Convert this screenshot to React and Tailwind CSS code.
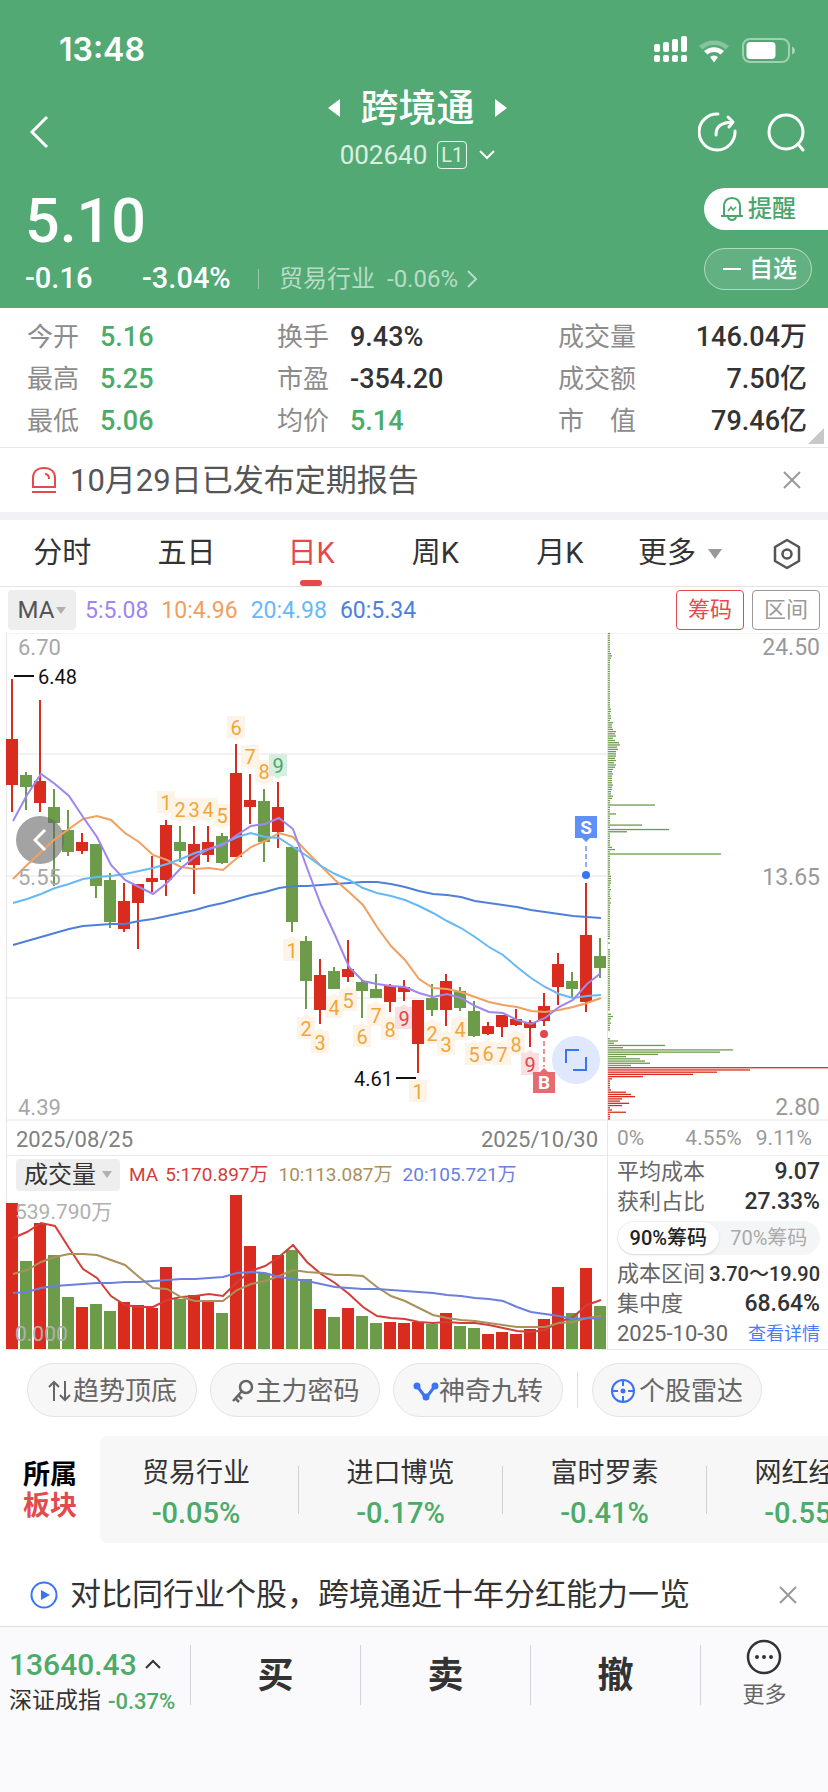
import { useState } from 'react';

const RED = '#d92c1f';
const GREEN = '#6c9c49';

// [up, high, low, top, bottom]
const candles = [
  [1, 46, 179, 106, 152], [0, 139, 177, 142, 154], [1, 67, 179, 148, 170], [0, 156, 253, 174, 190],
  [0, 177, 223, 197, 219], [1, 200, 221, 209, 218], [0, 211, 265, 211, 253], [0, 240, 295, 247, 289],
  [1, 250, 299, 268, 296], [1, 251, 316, 251, 270], [1, 223, 259, 245, 249], [1, 187, 263, 192, 247],
  [0, 193, 229, 209, 218], [1, 193, 261, 211, 232], [1, 193, 229, 209, 222], [0, 200, 231, 203, 230],
  [1, 111, 224, 140, 224], [1, 141, 191, 167, 174], [0, 156, 229, 168, 209], [1, 149, 215, 174, 199],
  [0, 214, 299, 214, 289], [0, 303, 376, 308, 348], [1, 326, 391, 342, 377], [0, 334, 356, 338, 356],
  [1, 307, 349, 336, 344], [0, 347, 385, 349, 358], [0, 341, 365, 356, 365], [1, 351, 379, 353, 369],
  [1, 347, 368, 354, 359], [1, 367, 440, 367, 411], [0, 351, 383, 365, 377], [1, 341, 393, 348, 377],
  [0, 354, 378, 358, 375], [0, 368, 404, 378, 403], [1, 389, 402, 393, 401], [1, 382, 404, 382, 394],
  [1, 376, 393, 386, 392], [1, 387, 414, 389, 395], [1, 360, 393, 373, 388], [1, 320, 372, 331, 354],
  [0, 339, 364, 348, 356], [1, 250, 379, 302, 369], [0, 305, 345, 323, 335],
];

const priceLines = [
  {
    color: '#4f80d9',
    ys: [312, 308, 304, 300, 296, 293, 292, 291, 291, 288, 286, 283, 280, 277, 273, 270, 266, 262, 259, 255, 253, 253, 252, 251, 250, 249, 249, 251, 254, 258, 261, 262, 264, 268, 270, 272, 274, 277, 279, 281, 283, 284, 285],
  },
  {
    color: '#f0a060',
    ys: [246, 232, 219, 206, 196, 186, 183, 187, 200, 209, 222, 227, 234, 236, 235, 237, 225, 214, 208, 200, 204, 219, 233, 247, 259, 272, 294, 313, 327, 346, 355, 356, 359, 364, 369, 372, 374, 378, 379, 377, 374, 370, 365],
  },
  {
    color: '#66b9f7',
    ys: [270, 266, 261, 255, 251, 246, 244, 243, 241, 238, 235, 231, 226, 220, 216, 211, 204, 200, 204, 205, 214, 223, 233, 241, 247, 255, 260, 263, 267, 273, 280, 288, 295, 304, 314, 322, 334, 345, 354, 361, 365, 363, 362],
  },
  {
    color: '#9f86ee',
    ys: [188, 162, 141, 151, 163, 184, 204, 232, 247, 254, 261, 250, 235, 224, 216, 212, 202, 193, 191, 185, 196, 235, 272, 302, 334, 348, 351, 353, 354, 360, 364, 361, 365, 373, 379, 380, 387, 391, 385, 374, 367, 351, 340],
  },
];

// [candle index, label, top]
const marks = [
  [11, 1, 158], [12, 2, 165], [13, 3, 165], [14, 4, 165], [15, 5, 171], [16, 6, 83], [17, 7, 112], [18, 8, 127], [19, 9, 121],
  [20, 1, 306], [21, 2, 384], [22, 3, 398], [23, 4, 363], [24, 5, 356], [25, 6, 392], [26, 7, 371], [27, 8, 385], [28, 9, 374],
  [29, 1, 447], [30, 2, 389], [31, 3, 400], [32, 4, 385], [33, 5, 410], [34, 6, 409], [35, 7, 410], [36, 8, 400], [37, 9, 420],
];

const volumes = [146, 88, 126, 94, 52, 42, 45, 38, 47, 44, 41, 82, 50, 54, 49, 36, 154, 103, 76, 94, 99, 70, 40, 32, 41, 33, 26, 27, 26, 27, 25, 36, 23, 21, 15, 17, 15, 20, 30, 62, 36, 81, 43];

const volumeLines = [
  {
    color: '#d23f3a',
    hs: [111, 117, 126, 123, 101, 80, 71, 53, 44, 42, 42, 49, 52, 53, 55, 53, 67, 78, 83, 92, 104, 87, 75, 66, 55, 42, 33, 31, 30, 27, 26, 27, 26, 26, 24, 21, 18, 17, 19, 27, 32, 44, 49],
  },
  {
    color: '#ab905c',
    hs: [75, 79, 87, 92, 95, 95, 94, 89, 84, 72, 61, 60, 52, 48, 48, 48, 59, 65, 68, 73, 79, 77, 76, 74, 74, 73, 62, 53, 48, 41, 34, 31, 29, 28, 26, 24, 22, 22, 22, 26, 27, 31, 33],
  },
  {
    color: '#6a80dc',
    hs: [56, 57, 61, 63, 64, 65, 66, 66, 67, 67, 68, 69, 70, 70, 71, 72, 76, 77, 76, 72, 70, 68, 65, 62, 61, 60, 60, 59, 58, 57, 56, 54, 53, 51, 50, 48, 42, 37, 35, 33, 30, 31, 30],
  },
];

// chip distribution rows that differ from the 2px minimum
const chipRows = {
  9: 3, 10: 4, 11: 3, 34: 3, 35: 3, 37: 3, 38: 3, 40: 5, 41: 4, 42: 4, 43: 5, 44: 8, 45: 7, 46: 8, 47: 5, 48: 7, 49: 11, 50: 12, 51: 9,
  52: 10, 53: 8, 54: 8, 55: 8, 56: 7, 57: 8, 58: 6, 59: 8, 60: 7, 61: 5, 62: 4, 63: 5, 64: 4, 65: 4, 66: 4, 67: 4, 68: 5, 69: 4,
  70: 4, 71: 3, 72: 3, 73: 5, 74: 4, 77: 47, 81: 8, 86: 34, 88: 61, 89: 19, 96: 4, 97: 7, 99: 113, 109: 3, 110: 3, 111: 3, 112: 3,
  115: 3, 119: 3, 121: 3, 138: 0, 140: 0, 141: 0, 170: 0, 171: 3, 172: 5, 173: 3, 175: 3, 179: 0, 180: 0, 181: 0, 183: 10, 184: 6,
  185: 57, 186: 15, 187: 125, 188: 112, 189: 50, 190: 18, 191: 32, 192: 37, 193: 42, 194: 23, 195: 220, 196: 142, 197: 109,
  198: 85, 199: 35, 200: 4, 205: 3, 206: 18, 207: 23, 208: 27, 209: 14, 210: 12, 211: 21, 212: 14, 214: 4, 215: 18,
};

const stats = [
  ['今开', '5.16', true], ['换手', '9.43%'], ['成交量', '146.04万'],
  ['最高', '5.25', true], ['市盈', '-354.20'], ['成交额', '7.50亿'],
  ['最低', '5.06', true], ['均价', '5.14', true], ['市值', '79.46亿'],
];

const sectors = [
  ['贸易行业', '-0.05%'], ['进口博览', '-0.17%'], ['富时罗素', '-0.41%'], ['网红经济', '-0.55%'],
];

const toPoints = (ys) => ys.map((y, i) => `${13 + i * 14},${y}`).join(' ');

function StatusIcons() {
  return (
    <svg width="142" height="28" viewBox="0 0 142 28" fill="white">
      {[8, 6, 3, 0].map((y, i) => (
        <g key={i}>
          <rect x={i * 9} y={y} width="6" height={16 - y} rx="2" />
          <rect x={i * 9} y="19" width="6" height="7" rx="2" />
        </g>
      ))}
      <path d="M45 10 A23 23 0 0 1 75 10 L71.500 13.500 A17 17 0 0 0 48.500 13.500 Z" opacity=".3" />
      <path d="M50 15 A15 15 0 0 1 70 15 L66.500 18.500 A10 10 0 0 0 53.500 18.500 Z" />
      <path d="M56 21 A6 6 0 0 1 64 21 L60 26.500 Z" />
      <rect x="89" y="3" width="46" height="23" rx="7" fill="none" stroke="white" strokeWidth="2" opacity=".45" />
      <rect x="92.500" y="6" width="29" height="17" rx="4" />
      <path d="M138 10.500 C142 12 142 17 138 18.500 Z" opacity=".5" />
    </svg>
  );
}

function CloseIcon() {
  return (
    <svg width="18" height="18" viewBox="0 0 18 18" stroke="#999" strokeWidth="2">
      <path d="M1 1 L17 17 M17 1 L1 17" />
    </svg>
  );
}

function Header() {
  return (
    <header className="bg-[#52a974] text-white">
      <div className="flex h-[84px] items-center justify-between pt-4 pr-8 pl-[59px]">
        <span className="font-[Inter] text-[32px] leading-9 font-semibold">13:48</span>
        <StatusIcons />
      </div>

      <div className="grid grid-cols-[1fr_auto_1fr] items-center pt-px pr-[22px] pl-[29px]">
        <button aria-label="返回" className="justify-self-start">
          <svg width="20" height="34" viewBox="0 0 20 34" fill="none" stroke="white" strokeWidth="3">
            <path d="M18 2 L3 17 L18 32" />
          </svg>
        </button>
        <div className="flex flex-col items-center">
          <h1 className="flex h-[46px] items-center gap-5 text-[38px] leading-[46px] font-medium">
            <svg width="12" height="18" viewBox="0 0 12 18" fill="white"><path d="M12 0 V18 L0 9 Z" /></svg>
            跨境通
            <svg width="12" height="18" viewBox="0 0 12 18" fill="white"><path d="M0 0 V18 L12 9 Z" /></svg>
          </h1>
          <div className="flex h-12 items-center">
            <span className="text-[26px] text-white/80">002640</span>
            <span className="ml-[10px] flex h-[28px] w-[30px] items-center justify-center rounded-[4px] border border-white/90 text-[20px] text-white/80">L1</span>
            <svg className="ml-3" width="16" height="10" viewBox="0 0 16 10" fill="none" stroke="white" strokeWidth="2">
              <path d="M1 1 L8 8 L15 1" />
            </svg>
          </div>
        </div>
        <div className="flex items-center gap-[28px] justify-self-end">
          <button aria-label="分享">
            <svg width="40" height="40" viewBox="0 0 40 40" fill="none" stroke="white" strokeWidth="3" strokeLinecap="round" strokeLinejoin="round">
              <path d="M20 2 A18 18 0 1 0 37 19" />
              <path d="M18 23 C18 14 23 11 34 10 M30 5 L35 10 L31 15" />
            </svg>
          </button>
          <button aria-label="搜索">
            <svg width="40" height="40" viewBox="0 0 40 40" fill="none" stroke="white" strokeWidth="3" strokeLinecap="round">
              <circle cx="20" cy="20" r="17" />
              <path d="M32 32 L37 38" />
            </svg>
          </button>
        </div>
      </div>

      <div className="flex justify-between pt-[9px] pb-3">
        <div className="pl-[25px]">
          <p className="text-[61px] leading-[66px] font-medium">5.10</p>
          <div className="mt-2 flex h-[34px] items-center text-[29px] font-medium">
            <span className="w-[117px]">-0.16</span>
            <span className="w-[116px]">-3.04%</span>
            <span className="h-5 w-px bg-white/40" />
            <a href="#industry" className="ml-5 flex items-center text-2xl font-normal text-white/60">
              <span>贸易行业</span>
              <span className="ml-3">-0.06%</span>
              <svg className="ml-2" width="12" height="18" viewBox="0 0 12 18" fill="none" stroke="currentColor" strokeWidth="2">
                <path d="M2 1 L10 9 L2 17" />
              </svg>
            </a>
          </div>
        </div>
        <div className="flex flex-col gap-[18px]">
          <button className="flex h-[42px] w-[124px] items-center rounded-l-full bg-white pl-4 text-2xl font-medium text-[#4ba56c]">
            <svg className="mr-1" width="24" height="26" viewBox="0 0 24 26" fill="none" stroke="currentColor" strokeWidth="2">
              <path d="M4 20 V11 C4 5 7 2 12 2 C17 2 20 5 20 11 V20 M1 20 H23 M8 21 C9 25 15 25 16 21" />
              <path d="M8 15 L11 11 L13 14 L16 11" strokeWidth="1.500" />
            </svg>
            提醒
          </button>
          <button className="flex h-[42px] w-[108px] items-center rounded-full border border-white/50 bg-white/10 pl-[18px] text-2xl font-medium">
            <span className="mr-2 h-[2px] w-[18px] bg-white" />
            自选
          </button>
        </div>
      </div>
    </header>
  );
}

function Stats() {
  return (
    <section className="relative grid grid-cols-[250fr_281fr_249fr] border-b border-[#e8e8e8] pt-2 pr-[21px] pb-[5px] pl-[27px]">
      {stats.map(([label, value, down], i) => {
        const last = i % 3 === 2;
        return (
          <div key={label} className={`flex h-[42px] items-center text-[26px] ${last ? 'justify-between' : ''}`}>
            <span className={`flex justify-between text-[#8c8c8c] ${last ? 'w-[78px]' : 'w-[73px]'}`}>
              {label === '市值' ? <><span>市</span><span>值</span></> : label}
            </span>
            <span className={`text-[27px] font-medium ${down ? 'text-[#4cab68]' : 'text-[#333]'}`}>{value}</span>
          </div>
        );
      })}
      <svg className="absolute right-1 bottom-[3px]" width="16" height="16" viewBox="0 0 16 16" fill="#c8c8c8">
        <path d="M16 0 V16 H0 Z" />
      </svg>
    </section>
  );
}

function Tabs() {
  const [active, setActive] = useState('日K');
  return (
    <nav className="flex h-[67px] border-b border-[#e4e4e4] text-[29px] text-[#333]">
      {['分时', '五日', '日K', '周K', '月K'].map((tab) => (
        <button
          key={tab}
          onClick={() => setActive(tab)}
          className={`relative flex-1 pt-[2px] ${active === tab ? 'text-[#e34a4c]' : ''}`}
        >
          {tab}
          {active === tab && (
            <span className="absolute bottom-0 left-1/2 h-[6px] w-[22px] -translate-x-1/2 rounded-full bg-[#e34a4c]" />
          )}
        </button>
      ))}
      <div className="flex w-[206px] items-center justify-between pt-[2px] pr-[27px] pl-4">
        <button className="flex items-center gap-3">
          更多
          <svg width="14" height="10" viewBox="0 0 14 10" fill="#999"><path d="M0 0 H14 L7 10 Z" /></svg>
        </button>
        <button aria-label="设置">
          <svg width="28" height="32" viewBox="0 0 28 32" fill="none" stroke="#555" strokeWidth="2.500" strokeLinejoin="round">
            <path d="M14 2 L26 9 V23 L14 30 L2 23 V9 Z" />
            <circle cx="14" cy="16" r="4.500" />
          </svg>
        </button>
      </div>
    </nav>
  );
}

function Mark({ index, label, top }) {
  const x = 12 + index * 14;
  const above = index < 20;
  let bg = '#fdf4e7';
  let fg = '#f0a63a';
  if (label === 9) {
    bg = above ? '#d8eee0' : '#f9dfe0';
    fg = above ? '#45ab6e' : '#e2474c';
  }
  return (
    <g>
      <rect x={x - 9} y={top} width="18" height="22" fill={bg} />
      <path d={above ? `M${x - 4} ${top + 22} h8 l-4 3 Z` : `M${x - 4} ${top} h8 l-4 -3 Z`} fill={bg} />
      <text x={x} y={top + 19} textAnchor="middle" fontSize="20" fill={fg}>{label}</text>
    </g>
  );
}

function PriceChart() {
  return (
    <div className="relative">
      <svg className="block h-[488px] w-full" viewBox="0 0 608 488" preserveAspectRatio="xMinYMin meet">
        <g stroke="#f2f2f2" strokeWidth="2">
          {[0, 121, 243, 365, 487].map((y) => <path key={y} d={`M6 ${y} H607`} />)}
        </g>
        <path d="M6.500 0 V488 M607.500 0 V488" stroke="#e6e6e6" />
        {marks.map(([index, label, top]) => <Mark key={index} index={index} label={label} top={top} />)}
        {candles.map(([up, high, low, top, bottom], i) => (
          <g key={i} fill={up ? RED : GREEN}>
            <rect x={11 + i * 14} y={high} width="2" height={low - high} />
            <rect x={6 + i * 14} y={top} width="12" height={bottom - top} />
          </g>
        ))}
        <circle cx="40" cy="207" r="24" fill="#666" opacity=".6" />
        {priceLines.map(({ color, ys }) => (
          <polyline key={color} points={toPoints(ys)} fill="none" stroke={color} strokeWidth="2" />
        ))}
        <g fontSize="22" fill="#a8a8a8">
          <text x="18" y="22">6.70</text>
          <text x="18" y="252">5.55</text>
          <text x="18" y="482">4.39</text>
        </g>
        <g fontSize="20" fill="#111">
          <text x="38" y="51">6.48</text>
          <text x="354" y="453">4.61</text>
          <path d="M14 43 H34 M396 445 H416" stroke="#111" strokeWidth="2" />
        </g>
        {/* sell / buy points */}
        <path d="M575 183 H597 V205 H590 L586 209 L582 205 H575 Z" fill="#5f90f8" />
        <path d="M586 213 V235" stroke="#8fb0fa" strokeWidth="2" strokeDasharray="5 3" />
        <circle cx="586" cy="242" r="4" fill="#3a74f5" />
        <text x="586" y="201" textAnchor="middle" fontSize="19" fontWeight="700" fill="#fff">S</text>
        <circle cx="544" cy="401" r="4" fill="#e3474c" />
        <path d="M544 408 V434" stroke="#eb9295" strokeWidth="2" strokeDasharray="5 3" />
        <path d="M533 439 H540 L544 435 L548 439 H555 V460 H533 Z" fill="#e66b6f" />
        <text x="544" y="456" textAnchor="middle" fontSize="19" fontWeight="700" fill="#fff">B</text>
      </svg>
      <button aria-label="向前" className="absolute top-[183px] left-4 flex size-12 items-center justify-center">
        <svg width="14" height="22" viewBox="0 0 14 22" fill="none" stroke="white" strokeWidth="3">
          <path d="M12 1 L2 11 L12 21" />
        </svg>
      </button>
      <button aria-label="全屏" className="absolute top-[403px] left-[552px] flex size-12 items-center justify-center rounded-full bg-[#dfe8fc]">
        <svg width="22" height="22" viewBox="0 0 22 22" fill="none" stroke="#3a74f5" strokeWidth="2">
          <path d="M1 14 V1 H14 M21 8 V21 H8" />
        </svg>
      </button>
    </div>
  );
}

function VolumeChart() {
  return (
    <svg className="block h-[158px] w-full" viewBox="0 0 608 158" preserveAspectRatio="xMinYMin meet">
      <path d="M6.500 0 V157 M607.500 0 V158 M6 157.500 H608" stroke="#e6e6e6" />
      {volumes.map((v, i) => (
        <rect key={i} x={6 + i * 14} y={157 - v} width="12" height={v} fill={candles[i][0] ? RED : GREEN} />
      ))}
      {volumeLines.map(({ color, hs }) => (
        <polyline key={color} points={toPoints(hs.map((h) => 157 - h))} fill="none" stroke={color} strokeWidth="2" />
      ))}
      <g fontSize="21" fill="#b0b0b0">
        <text x="15" y="27">539.790万</text>
        <text x="15" y="149">0.000</text>
      </g>
    </svg>
  );
}

function ChipChart() {
  return (
    <svg className="block h-[488px] w-full" viewBox="0 0 220 488" preserveAspectRatio="xMinYMin meet">
      <g stroke="#f2f2f2" strokeWidth="2">
        <path d="M0 0 H220 M0 487 H220" />
      </g>
      {Array.from({ length: 219 }, (_, i) => (
        <rect key={i} x="0" y={i * 2.226} width={chipRows[i] ?? 2} height="1.300" fill={i < 195 ? GREEN : RED} />
      ))}
      <g fontSize="23" fill="#999" textAnchor="end">
        <text x="212" y="22">24.50</text>
        <text x="212" y="252">13.65</text>
        <text x="212" y="482">2.80</text>
      </g>
    </svg>
  );
}

function ChipPanel() {
  const [range, setRange] = useState('90');
  return (
    <aside className="flex w-[220px] shrink-0 flex-col border-b border-[#e8e8e8]">
      <ChipChart />
      <div className="flex h-[35px] items-center border-b border-[#f0f0f0] pt-[2px] pr-4 pl-[9px] text-[21px] text-[#999]">
        <span className="flex-1">0%</span>
        <span>4.55%</span>
        <span className="ml-[14px]">9.11%</span>
      </div>
      <div className="pt-px pr-2 pl-[9px] text-[22px] leading-[30px] text-[#666]">
        <div className="flex justify-between">
          <span>平均成本</span>
          <span className="text-[23px] font-medium text-[#333]">9.07</span>
        </div>
        <div className="flex justify-between">
          <span>获利占比</span>
          <span className="text-[23px] font-medium text-[#333]">27.33%</span>
        </div>
        <div className="my-1 flex h-[34px] rounded-full bg-[#f4f5f7] p-px text-[20px]">
          {['90', '70'].map((r) => (
            <button
              key={r}
              onClick={() => setRange(r)}
              className={`flex-1 rounded-full ${range === r ? 'bg-white font-medium text-[#222] shadow-sm' : 'text-[#aaa]'}`}
            >
              {r}%筹码
            </button>
          ))}
        </div>
        <div className="flex justify-between whitespace-nowrap">
          <span>成本区间</span>
          <span className="text-[20px] font-medium text-[#333]">3.70～19.90</span>
        </div>
        <div className="flex justify-between">
          <span>集中度</span>
          <span className="text-[23px] font-medium text-[#333]">68.64%</span>
        </div>
        <div className="flex justify-between whitespace-nowrap">
          <span>2025-10-30</span>
          <a href="#detail" className="text-[18px] text-[#4a7df5]">查看详情</a>
        </div>
      </div>
    </aside>
  );
}

function KLine() {
  return (
    <section>
      <div className="flex h-[46px] items-center px-2 text-2xl">
        <button className="flex h-10 w-[68px] items-center justify-center gap-[2px] rounded-[4px] bg-[#eee] text-[#555]">
          MA
          <svg width="10" height="7" viewBox="0 0 10 7" fill="#b0b0b0"><path d="M0 0 H10 L5 7 Z" /></svg>
        </button>
        <div className="ml-[9px] flex flex-1 gap-[13px] pt-[2px] text-[23px]">
          <span className="text-[#9f86ee]">5:5.08</span>
          <span className="text-[#f0a060]">10:4.96</span>
          <span className="text-[#66b9f7]">20:4.98</span>
          <span className="text-[#4f80d9]">60:5.34</span>
        </div>
        <button className="h-10 w-[68px] rounded-[4px] border border-[#e34a4c] text-[22px] text-[#e34a4c]">筹码</button>
        <button className="ml-2 h-10 w-[68px] rounded-[4px] border border-[#999] text-[22px] text-[#999]">区间</button>
      </div>

      <div className="flex">
        <div className="min-w-0 flex-1">
          <PriceChart />
          <div className="ml-[6px] flex h-[35px] items-center justify-between border-r border-b border-l border-[#e8e8e8] pt-[2px] pr-[9px] pl-[9px] text-[22px] text-[#808080]">
            <span>2025/08/25</span>
            <span>2025/10/30</span>
          </div>
          <div className="ml-[6px] flex h-9 items-center border-r border-l border-[#e8e8e8] pt-px pl-[9px] text-[19px]">
            <button className="flex h-8 w-[104px] items-center justify-center gap-[6px] rounded-[4px] bg-[#eee] text-[24px] text-[#333]">
              成交量
              <svg width="10" height="7" viewBox="0 0 10 7" fill="#b0b0b0"><path d="M0 0 H10 L5 7 Z" /></svg>
            </button>
            <span className="ml-[9px] pt-[2px] text-[#d23f3a]"><span className="mr-[7px]">MA</span>5:170.897万</span>
            <span className="ml-[10px] pt-[2px] text-[#ab905c]">10:113.087万</span>
            <span className="ml-[10px] pt-[2px] text-[#6a80dc]">20:105.721万</span>
          </div>
          <VolumeChart />
        </div>
        <ChipPanel />
      </div>
    </section>
  );
}

const toolClass = 'flex h-[54px] w-[170px] items-center justify-center rounded-full border border-[#e4e4e4] bg-[#f7f7f7] pt-[2px]';

function Tools() {
  return (
    <div className="flex items-center pt-[13px] pl-[27px] text-[26px] text-[#666]">
      <button className={toolClass}>
        <svg width="26" height="24" viewBox="0 0 26 24" fill="none" stroke="#666" strokeWidth="2">
          <path d="M7 22 V3 M2 8 L7 3 L12 8 M18 2 V21 M13 16 L18 21 L23 16" />
        </svg>
        趋势顶底
      </button>
      <button className={`ml-[13px] ${toolClass}`}>
        <svg className="mr-px" width="24" height="24" viewBox="0 0 24 24" fill="none" stroke="#666" strokeWidth="2.500">
          <circle cx="16" cy="8" r="6" />
          <path d="M12 12 L3 22 M8 16 L12 20 M5 19 L9 23" />
        </svg>
        主力密码
      </button>
      <button className={`ml-[13px] ${toolClass}`}>
        <svg width="26" height="24" viewBox="0 0 26 24" fill="#3a74f5" stroke="#3a74f5" strokeWidth="3">
          <path d="M4 7 L13 19 L22 7" fill="none" />
          <circle cx="4" cy="7" r="2" />
          <circle cx="13" cy="18" r="2" />
          <circle cx="22" cy="7" r="2" />
        </svg>
        神奇九转
      </button>
      <span className="mx-[14px] h-9 w-px bg-[#ddd]" />
      <button className={toolClass}>
        <svg className="mr-1" width="24" height="24" viewBox="0 0 24 24" fill="none" stroke="#3a74f5" strokeWidth="2">
          <circle cx="12" cy="12" r="11" />
          <path d="M12 1 V7 M12 17 V23 M1 12 H7 M17 12 H23" />
          <circle cx="12" cy="12" r="1.500" fill="#3a74f5" />
        </svg>
        个股雷达
      </button>
    </div>
  );
}

function Sectors() {
  return (
    <section className="mt-[19px] flex h-[107px] items-center">
      <h2 className="w-[100px] shrink-0 pt-[3px] pl-[23px] text-[27px] leading-[31px] font-bold text-black">
        所属<br /><span className="text-[#e34a4c]">板块</span>
      </h2>
      <div className="flex h-full min-w-0 flex-1 items-center overflow-x-auto rounded-l-lg bg-[#f7f7f7] [scrollbar-width:none]">
        {sectors.map(([name, pct], i) => (
          <a
            key={name}
            href="#sector"
            className={`flex h-12 shrink-0 flex-col items-center justify-center pt-[6px] whitespace-nowrap ${i === 0 ? 'w-[198px] pr-[6px]' : 'w-[204px] border-l border-[#d0d0d0]'}`}
          >
            <span className="text-[27px] leading-10 text-[#333]">{name}</span>
            <span className="text-[29px] leading-10 font-medium text-[#4cab68]">{pct}</span>
          </a>
        ))}
      </div>
    </section>
  );
}

function BottomBar() {
  return (
    <footer className="flex-1 border-t border-[#dcdcdc] bg-[#fafafc]">
      <div className="flex items-start pt-[18px]">
        <div className="w-[190px] pl-[9px] text-[#333]">
          <p className="flex h-[38px] items-center text-[30px] font-medium text-[#4cab68]">
            13640.43
            <svg className="ml-2" width="16" height="10" viewBox="0 0 16 10" fill="none" stroke="#333" strokeWidth="2">
              <path d="M1 9 L8 2 L15 9" />
            </svg>
          </p>
          <p className="flex h-9 items-center text-[23px] whitespace-nowrap">
            深证成指<span className="ml-[7px] text-[22px] font-medium text-[#4cab68]">-0.37%</span>
          </p>
        </div>
        {['买', '卖', '撤'].map((label) => (
          <button key={label} className="h-[60px] flex-1 border-l border-[#d4d4d8] pt-[2px] text-[36px] font-bold text-[#333]">
            {label}
          </button>
        ))}
        <div className="flex h-[60px] w-[128px] justify-center border-l border-[#d4d4d8]">
          <button className="mt-[-6px] flex flex-col items-center self-start text-[22px] leading-[40px] text-[#666]">
            <svg width="36" height="36" viewBox="0 0 36 36" fill="none" stroke="#333" strokeWidth="2.500">
              <circle cx="18" cy="18" r="16" />
              <path d="M11 18 h0.010 M18 18 h0.010 M25 18 h0.010" strokeWidth="4" strokeLinecap="round" />
            </svg>
            更多
          </button>
        </div>
      </div>
    </footer>
  );
}

export default function App() {
  return (
    <div className="flex min-h-screen flex-col bg-white font-[Roboto,'Noto_Sans_CJK_SC',sans-serif]">
      <Header />
      <Stats />
      <div className="flex h-16 items-center pr-[27px] pl-[31px] text-[31px] text-[#555]">
        <svg width="26" height="26" viewBox="0 0 26 26" fill="none" stroke="#e34a4c" strokeWidth="2">
          <path d="M2 20 V11 C2 5 6 1 13 1 C20 1 24 5 24 11 V20 Z M1 25 H25 M14 7 C17 7 18 9 18 12" />
        </svg>
        <span className="ml-[13px] flex-1 pt-[2px]">10月29日已发布定期报告</span>
        <button aria-label="关闭公告"><CloseIcon /></button>
      </div>
      <div className="h-2 bg-[#f1f2f7]" />
      <Tabs />
      <KLine />
      <Tools />
      <Sectors />
      <div className="mt-5 flex h-[63px] items-center pr-[31px] pl-[30px] text-[31px] text-[#333]">
        <svg width="28" height="28" viewBox="0 0 28 28" fill="none" stroke="#3a74f5" strokeWidth="2">
          <circle cx="14" cy="14" r="12.500" />
          <path d="M11 9 L20 14 L11 19 Z" fill="#3a74f5" stroke="none" />
        </svg>
        <a href="#compare" className="ml-3 flex-1 pt-[2px] whitespace-nowrap">对比同行业个股，跨境通近十年分红能力一览</a>
        <button aria-label="关闭"><CloseIcon /></button>
      </div>
      <BottomBar />
    </div>
  );
}
